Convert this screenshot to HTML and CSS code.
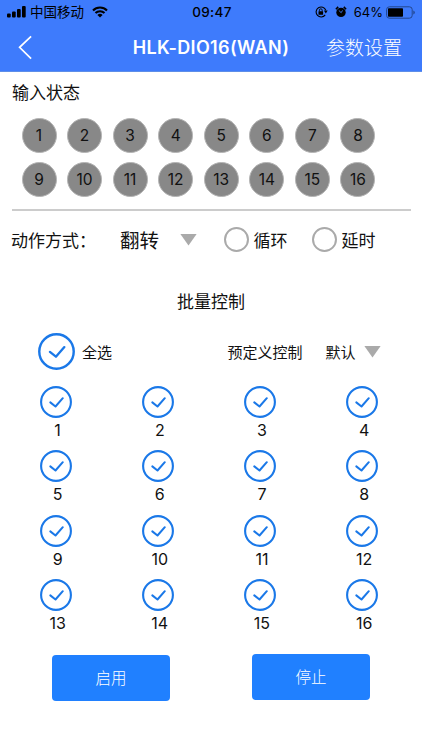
FILE: index.html
```html
<!DOCTYPE html>
<html lang="zh-CN">
<head>
<meta charset="utf-8">
<title>HLK-DIO16</title>
<link rel="stylesheet" href="styles.css">
</head>
<body>
<svg width="0" height="0" class="defs">
  <symbol id="check" viewBox="0 0 32 32">
    <circle cx="16" cy="16" r="14.9" fill="none" stroke="currentColor" stroke-width="2.1"/>
    <path d="M10.3 16.4l5.2 4.1 7.3-8.3" fill="none" stroke="currentColor" stroke-width="2" stroke-linecap="round" stroke-linejoin="round"/>
  </symbol>
</svg>
<header class="header">
  <div class="status">
    <div class="status-left">
      <svg class="signal" width="19" height="12" viewBox="0 0 19 12"><rect x="0" y="7.5" width="3.7" height="4" rx="1"/><rect x="5" y="5.4" width="3.7" height="6.1" rx="1"/><rect x="10" y="3" width="3.7" height="8.5" rx="1"/><rect x="15" y="0" width="3.7" height="11.5" rx="1"/></svg>
      <span class="carrier">中国移动</span>
      <svg class="wifi" width="16" height="12" viewBox="0 0 16 12" fill="none" stroke="#000"><path d="M1 4.4a10 10 0 0 1 14 0M3.5 7.1a6.4 6.4 0 0 1 9 0" stroke-width="2.1"/><path d="M8 11.5L5.4 8.9a3.8 3.8 0 0 1 5.2 0z" fill="#000" stroke="none"/></svg>
    </div>
    <div class="clock">09:47</div>
    <div class="status-right">
      <svg width="13" height="12" viewBox="0 0 13 12"><path d="M10.8 4.2A5 5 0 1 0 10.2 8.9" fill="none" stroke="#000" stroke-width="1.1"/><path d="M8.9 4.6h3.8l-1.9 2.9z"/><rect x="3.5" y="5.2" width="4.6" height="3.6" rx=".4"/><path d="M4.4 5.4V4.2a1.4 1.4 0 0 1 2.8 0v1.2" fill="none" stroke="#000" stroke-width=".9"/></svg>
      <svg class="alarm" width="12" height="12" viewBox="0 0 12 12"><circle cx="6" cy="6.4" r="4.7"/><path d="M.9 3.2L3.2.9M11.1 3.2L8.8.9" stroke="#000" stroke-width="1.6"/><path d="M3.8 4.4l2.4 2.3 1.3-2.3" fill="none" stroke="#3e7bfc" stroke-width=".9"/></svg>
      <span class="percent">64%</span>
      <svg class="battery" width="29" height="13" viewBox="0 0 29 13"><rect x=".6" y=".8" width="25.6" height="11.4" rx="2.8" fill="none" stroke="#22468e" stroke-width="1"/><rect x="2" y="2.3" width="15" height="8.4" rx=".8"/><path d="M27.3 4.4q1.5.6 1.5 2.1t-1.5 2.1z" fill="#22468e"/></svg>
    </div>
  </div>
  <nav class="nav">
    <svg class="back" width="15" height="25" viewBox="0 0 15 25"><path d="M13.1 1.3L1.6 12.3l11.5 11.3" fill="none" stroke="#fff" stroke-width="1.7"/></svg>
    <h1 class="title">HLK-DIO16(WAN)</h1>
    <span class="settings">参数设置</span>
  </nav>
</header>
<main>
  <section class="inputs">
    <h2 class="heading">输入状态</h2>
    <div class="lamps">
      <span class="lamp">1</span><span class="lamp">2</span><span class="lamp">3</span><span class="lamp">4</span><span class="lamp">5</span><span class="lamp">6</span><span class="lamp">7</span><span class="lamp">8</span>
      <span class="lamp">9</span><span class="lamp">10</span><span class="lamp">11</span><span class="lamp">12</span><span class="lamp">13</span><span class="lamp">14</span><span class="lamp">15</span><span class="lamp">16</span>
    </div>
  </section>
  <section class="mode">
    <span class="mode-label">动作方式：</span>
    <span class="mode-value">翻转</span>
    <span class="arrow"></span>
    <span class="radio"></span><span class="radio-label">循环</span>
    <span class="radio"></span><span class="radio-label">延时</span>
  </section>
  <h2 class="batch-title">批量控制</h2>
  <section class="batch">
    <svg class="check-all"><use href="#check"/></svg>
    <span class="all-label">全选</span>
    <span class="preset-label">预定义控制</span>
    <span class="preset-value">默认</span>
    <span class="arrow"></span>
  </section>
  <section class="channels">
    <div class="channel"><svg class="check"><use href="#check"/></svg><span>1</span></div>
    <div class="channel"><svg class="check"><use href="#check"/></svg><span>2</span></div>
    <div class="channel"><svg class="check"><use href="#check"/></svg><span>3</span></div>
    <div class="channel"><svg class="check"><use href="#check"/></svg><span>4</span></div>
    <div class="channel"><svg class="check"><use href="#check"/></svg><span>5</span></div>
    <div class="channel"><svg class="check"><use href="#check"/></svg><span>6</span></div>
    <div class="channel"><svg class="check"><use href="#check"/></svg><span>7</span></div>
    <div class="channel"><svg class="check"><use href="#check"/></svg><span>8</span></div>
    <div class="channel"><svg class="check"><use href="#check"/></svg><span>9</span></div>
    <div class="channel"><svg class="check"><use href="#check"/></svg><span>10</span></div>
    <div class="channel"><svg class="check"><use href="#check"/></svg><span>11</span></div>
    <div class="channel"><svg class="check"><use href="#check"/></svg><span>12</span></div>
    <div class="channel"><svg class="check"><use href="#check"/></svg><span>13</span></div>
    <div class="channel"><svg class="check"><use href="#check"/></svg><span>14</span></div>
    <div class="channel"><svg class="check"><use href="#check"/></svg><span>15</span></div>
    <div class="channel"><svg class="check"><use href="#check"/></svg><span>16</span></div>
  </section>
  <section class="actions">
    <button class="btn btn-on">启用</button>
    <button class="btn">停止</button>
  </section>
</main>
</body>
</html>
```
FILE: styles.css
```css
* { box-sizing: border-box; }
body {
  margin: 0;
  width: 422px;
  height: 750px;
  overflow: hidden;
  background: #fff;
  color: #111;
  font-family: Inter, "Noto Sans CJK SC", sans-serif;
}
h1, h2 { margin: 0; font-weight: 400; }
svg { display: block; flex: none; }
span { white-space: nowrap; }
.defs { display: none; }

.header {
  height: 72px;
  background: #3e7bfc;
  border-bottom: 1px solid #5e8ee8;
}
.status {
  display: grid;
  grid-template-columns: 1fr 50px 1fr;
  height: 24px;
  padding: 0 7px;
  align-items: center;
  color: #000;
  font-size: 13.5px;
  line-height: 24px;
}
.status-left, .status-right { display: flex; align-items: center; }
.status-right { justify-content: flex-end; }
.carrier { margin-left: 4px; }
.wifi { margin-left: 8px; }
.clock { padding-left: 2px; text-align: center; font-weight: 500; letter-spacing: 0.3px; }
.alarm { margin-left: 7px; }
.percent { margin-left: 7px; font-size: 13px; }
.battery { margin-left: 3px; }
.nav {
  display: grid;
  grid-template-columns: 115px 1fr 115px;
  height: 47px;
  align-items: center;
  color: #fff;
}
.back { margin-left: 18px; }
.title {
  font-size: 18px;
  font-weight: 600;
  letter-spacing: 0.35px;
  text-align: center;
  white-space: nowrap;
}
.settings { margin: -2px 0 0 19px; font-size: 19px; font-weight: 300; }

.inputs {
  margin: 0 11px 0 12px;
  height: 139px;
  border-bottom: 2px solid #ccc;
}
.heading { height: 46px; line-height: 43px; font-size: 17px; }
.lamps {
  display: grid;
  grid-template-columns: repeat(8, 35px);
  gap: 9px 10.57px;
  margin-left: 9.5px;
}
.lamp {
  height: 35px;
  border: 1px solid #b4b4b4;
  border-radius: 50%;
  background: #888;
  font-size: 15.5px;
  line-height: 34px;
  text-align: center;
}

.mode {
  display: flex;
  align-items: center;
  height: 57px;
  padding-left: 11px;
  font-size: 17px;
}
.mode-label { width: 109px; }
.mode-value { width: 60px; font-size: 19.5px; }
.arrow {
  width: 17px;
  height: 12px;
  background: #aaa;
  clip-path: polygon(0 0, 100% 0, 50% 100%);
}
.radio {
  width: 25px;
  height: 25px;
  margin-left: 26.5px;
  border: 2px solid #aaa;
  border-radius: 50%;
}
.radio-label { width: 34px; margin-left: 5px; }
.radio-label + .radio { margin-left: 24px; }

.batch-title {
  height: 65px;
  line-height: 68px;
  font-size: 17px;
  text-align: center;
}
.batch {
  display: flex;
  align-items: center;
  height: 37px;
  padding-left: 38px;
  font-size: 15px;
}
.check-all { width: 37px; height: 37px; color: #1a78e8; }
.all-label { width: 145.5px; margin-left: 7px; }
.preset-label { width: 98px; }
.preset-value { width: 38.5px; }

.channels {
  display: grid;
  grid-template-columns: repeat(4, 102.2px);
  grid-auto-rows: 64.3px;
  margin: 16px 0 0 4.5px;
}
.channel {
  display: flex;
  flex-direction: column;
  align-items: center;
  font-size: 16px;
  line-height: 24px;
}
.channel span { padding-left: 4px; }
.check { width: 32px; height: 32px; color: #1a78e8; }

.actions {
  display: flex;
  gap: 82px;
  margin: 10.5px 0 0 52px;
}
.btn {
  width: 118px;
  height: 46px;
  padding: 0;
  border: 0;
  border-radius: 4px;
  background: #2080ff;
  color: #fff;
  font: 300 15.5px/47px Inter, "Noto Sans CJK SC", sans-serif;
}
.btn-on { margin-top: 1px; }
```
